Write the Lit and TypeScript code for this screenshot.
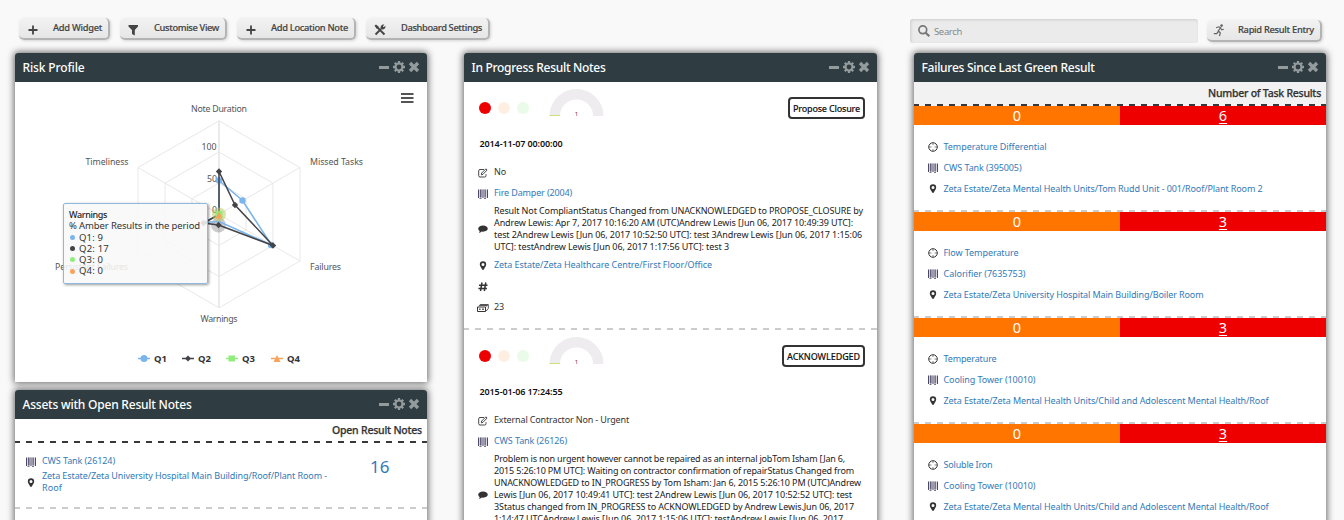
import { LitElement, html, svg, css } from "lit";
import { customElement, property } from "lit/decorators.js";

/* A single line of text set to a given measure by adjusting its tracking. */
@customElement("fit-line")
class FitLine extends LitElement {
  @property({ type: Number }) w = 0;
  static styles = css`:host{display:inline-block;white-space:nowrap}`;
  firstUpdated() {
    const n = (this.textContent || "").trim().length;
    const natural = this.getBoundingClientRect().width;
    if (this.w && n) this.style.letterSpacing = `${(this.w - natural) / n}px`;
  }
  render() { return html`<slot></slot>`; }
}

const t = (s: string, w: number) => html`<fit-line w=${w}>${s}</fit-line>`;

const glyphs: Record<string, unknown> = {
  plus: svg`<path d="M7 2.500v9M2.500 7h9" stroke="currentColor" stroke-width="1.800" fill="none"/>`,
  filter: svg`<path d="M2.500 2h9.500v1.500L8.800 7v5.500L6 11V7L2.500 3.500z"/>`,
  tools: svg`<path d="M3.500 3.500l8 8M2.500 11.500l5.500-5.500" stroke="currentColor" stroke-width="1.800" fill="none"/><path d="M1.500 2.800L3 1.500l3 2.400-2 2zM7.600 5.600C7 3 9 1.200 11.300 1.700L9.800 3.300l.9.9 1.700-1.400C13 5.200 10.600 7 8.600 6.400z"/>`,
  run: svg`<circle cx="9.600" cy="2.600" r="1.300"/><path d="M4 4.800L6.800 3.800l1.800.8L6.300 8l2 1.700-.8 3.300M6.300 8.400L4.800 10.600H1.800M8.400 5l1.400 1.800 2-.6" stroke="currentColor" stroke-width="1.200" fill="none"/>`,
  search: svg`<circle cx="5.800" cy="5.800" r="3.900" stroke="currentColor" stroke-width="1.700" fill="none"/><path d="M8.700 8.700l3.600 3.600" stroke="currentColor" stroke-width="2.200"/>`,
  minus: svg`<path d="M2 6h10v3H2z"/>`,
  gear: svg`<circle cx="7" cy="7" r="3.500" fill="none" stroke="currentColor" stroke-width="2.200"/><path d="M7 1v2.200M7 10.800V13M1 7h2.200M10.800 7H13M2.800 2.800l1.500 1.500M9.700 9.700l1.500 1.500M2.800 11.200l1.500-1.500M9.700 4.300l1.500-1.500" stroke="currentColor" stroke-width="2.300"/>`,
  close: svg`<path d="M3 3l8 8M11 3l-8 8" stroke="currentColor" stroke-width="3.300"/>`,
  edit: svg`<path d="M8 3.500H4Q2.700 3.500 2.700 4.800v4.900Q2.700 11 4 11h4.700q1.300 0 1.300-1.300V8.200" fill="none" stroke="currentColor" stroke-width=".9"/><path d="M5.300 8.800l.4-1.800L9.900 2.800l1.200 1.200L7 8.300z" fill="none" stroke="currentColor" stroke-width=".9"/>`,
  barcode: svg`<g fill="#4a4a66"><path d="M2 2.500h1v8.500H2zM4 2.500h1.500v8H4zM6.500 2.500h1v8.500h-1zM8.500 2.500h1.300v8H8.500zM11 2.500h1v8.500h-1zM3.500 11h2v.8h-2zM8 11h2v.8H8z"/></g><path d="M3 2.500h8v8H3z" fill="#8f86a0" opacity=".35"/>`,
  comment: svg`<path d="M7 3.500c2.800 0 4.800 1.400 4.800 3.100s-2 3.100-4.800 3.100q-.7 0-1.300-.1Q4.300 10.900 2.900 10.900q.8-.8.800-1.700Q2.200 8.200 2.200 6.600C2.200 4.900 4.200 3.500 7 3.500z"/>`,
  pin: svg`<path fill-rule="evenodd" d="M7 2.300a3.200 3.200 0 0 1 3.200 3.200c0 1.600-1.300 2.600-2.200 4.800q-1 1.500-2 0C5.100 8.100 3.800 7.100 3.800 5.500A3.200 3.200 0 0 1 7 2.300zM7 4a1.500 1.500 0 1 0 0 3A1.500 1.500 0 0 0 7 4z"/>`,
  hash: svg`<path d="M6 2.500l-1.500 8.500M9.800 2.500L8.300 11M3 5.200h8.500M2.400 8.400h8.500" stroke="currentColor" stroke-width="1.500" fill="none"/>`,
  card: svg`<path d="M1.500 6h8v4.500h-8z" fill="none" stroke="currentColor"/><path d="M2.800 5.300l1.300-1.800h8.200V7.500L10.200 10M9.800 5.600l2.200-2M4 4.500h7.500" fill="none" stroke="#555" stroke-width="1"/><path d="M3.200 7.500h1.300v1.500H3.200zM6.200 7.500h1.500v1.500H6.200z"/>`,
  target: svg`<circle cx="7" cy="7" r="4.300" fill="none" stroke="currentColor"/><path d="M7 3V5M7 9v2M3 7H5.500M8.500 7H11" stroke="currentColor" stroke-width=".6"/>`,
};
const icon = (n: string, cls = "") =>
  html`<svg class="ico ${cls}" width="14" height="14" viewBox="0 0 14 14" fill="currentColor">${glyphs[n]}</svg>`;

const base = css`
  *{box-sizing:border-box}
  .ico{display:block;flex:none}
  .link{color:#337ab7}
  .row{display:flex;align-items:center;min-height:21px;padding-left:12px;color:#333;font-size:9px;line-height:12px}
  .row .txt{margin-left:4px;display:flex;flex-direction:column;align-items:flex-start}
  .row .ico{position:relative;top:1px}
`;

@customElement("widget-panel")
class WidgetPanel extends LitElement {
  @property() name = "";
  @property({ type: Number }) w = 0;
  static styles = [base, css`
    :host{display:block;background:#fff;border-radius:3px 3px 0 0;box-shadow:0 0 7px 1px rgba(0,0,0,.6)}
    header{height:29px;background:#2f3d42;border-radius:3px 3px 0 0;display:flex;align-items:center;padding:0 6px 0 7.500px;color:#fff;font-size:12px;font-weight:500}
    .grow{flex:1}
    .tools{display:flex;gap:1px;color:#949b9d;margin-top:-1px}
  `];
  render() {
    return html`<header>${t(this.name, this.w)}<span class="grow"></span>
      <span class="tools">${icon("minus")}${icon("gear")}${icon("close")}</span></header><slot></slot>`;
  }
}

@customElement("risk-chart")
class RiskChart extends LitElement {
  static styles = css`
    :host{display:block;height:300px;position:relative}
    svg{display:block}
    text{font-size:8.800px;fill:#555}
    .key{font-size:9.500px;font-weight:700;fill:#333}
    .tip{box-sizing:border-box;position:absolute;left:48px;top:121px;width:145px;height:81px;border:1px solid #8fb9e0;border-radius:2px;background:rgba(248,248,248,.87);box-shadow:1px 1px 3px rgba(0,0,0,.4);padding:5px 5px 0;font-size:9.500px;line-height:11.300px;color:#333}
    .tip div{display:flex;align-items:center;height:11.300px}
    .tip .head{font-size:9px;font-weight:500;color:#222}
    i{width:5px;height:5px;border-radius:50%;margin:0 4px 0 1px}
    .q1{background:#7cb5ec}.q2{background:#434348}.q3{background:#90ed7d}.q4{background:#f7a35c}
  `;
  render() {
    const cx = 204, cy = 132.3;
    const hex = (r: number) => [0, 1, 2, 3, 4, 5].map(k => {
      const a = (k * Math.PI) / 3;
      return `${cx + r * Math.sin(a)},${cy - r * Math.cos(a)}`;
    });
    const label = (s: string, x: number, y: number, w: number) =>
      svg`<text x=${x} y=${y} textLength=${w}>${s}</text>`;
    const key = (s: string, x: number, c: string, m: unknown) =>
      svg`<path d="M${x} 276.500h12" stroke=${c} stroke-width="1.500"/>${m}<text class="key" x=${x + 16} y="280" textLength="13">${s}</text>`;
    return html`<svg width="412" height="300" viewBox="0 0 412 300">
      <g fill="none" stroke="#e8e8e8">
        ${[31.2, 62.3, 93.5].map(r => svg`<polygon points=${hex(r).join(" ")}/>`)}
        ${hex(93.5).map(p => svg`<path d="M${cx} ${cy}L${p}"/>`)}
      </g>
      <path d="M204 38.800V226" stroke="#e8e8e8" stroke-width="1.500"/>
      ${label("Note Duration", 176, 30, 56)}${label("Missed Tasks", 295, 83, 53)}
      ${label("Failures", 295, 188, 31)}${label("Warnings", 185.500, 240, 37)}
      ${label("Persistent Failures", 40, 188, 73)}${label("Timeliness", 70.500, 83, 43)}
      ${label("100", 186.500, 68, 15)}${label("50", 192, 100, 10)}${label("0", 197, 131, 5)}
      <circle cx="203.500" cy="143" r="7.500" fill="#434348" opacity=".27"/>
      <path d="M204 98.500L227.500 118.500L256.500 163L204 139.500L189 140.500L204 133z" fill="none" stroke="#7cb5ec" stroke-width="1.600"/>
      <g fill="#7cb5ec"><circle cx="204" cy="98.500" r="3.200"/><circle cx="227.500" cy="118.500" r="3.200"/><circle cx="256" cy="163" r="3.200"/></g>
      <path d="M204 89.500L220 123L258 163.500L203.500 143L188.500 141L204 132.500z" fill="none" stroke="#434348" stroke-width="1.500"/>
      ${[[204, 89.5], [220, 123], [258, 163.5], [203.5, 143], [188.5, 141]].map(([x, y]) =>
        svg`<path d="M${x} ${y - 3.2}l3.200 3.200-3.200 3.200-3.200-3.200z" fill="#434348"/>`)}
      <circle cx="204" cy="132.500" r="7" fill="#b9c85a" opacity=".5"/>
      <path d="M200.500 129h7v7h-7z" fill="#90ed7d"/><path d="M204 129l3.500 7.500h-7z" fill="#f7a35c"/>
      <path d="M386 12h12.500M386 16h12.500M386 20h12.500" stroke="#555" stroke-width="2"/>
      ${key("Q1", 123, "#7cb5ec", svg`<circle cx="129" cy="276.500" r="3.500" fill="#7cb5ec"/>`)}
      ${key("Q2", 167, "#434348", svg`<path d="M173 273.500l3 3-3 3-3-3z" fill="#434348"/>`)}
      ${key("Q3", 211, "#90ed7d", svg`<path d="M213.500 273.500h6.500v6h-6.500z" fill="#90ed7d"/>`)}
      ${key("Q4", 256, "#f7a35c", svg`<path d="M262 273l3.500 7h-7z" fill="#f7a35c"/>`)}
    </svg>
    <div class="tip"><div class="head">${t("Warnings", 38)}</div><div>${t("% Amber Results in the period", 131)}</div>
      <div><i class="q1"></i>${t("Q1: 9", 24)}</div><div><i class="q2"></i>${t("Q2: 17", 30)}</div>
      <div><i class="q3"></i>${t("Q3: 0", 24)}</div><div><i class="q4"></i>${t("Q4: 0", 24)}</div></div>`;
  }
}

type Line = [string, number];
const notes: { status: Line; date: string; type: Line; asset: Line; body: Line[]; tall?: boolean; place?: Line; count?: string }[] = [
  { status: ["Propose Closure", 67], date: "2014-11-07 00:00:00", type: ["No", 12], asset: ["Fire Damper (2004)", 78],
    body: [["Result Not CompliantStatus Changed from UNACKNOWLEDGED to PROPOSE_CLOSURE by", 369],
      ["Andrew Lewis: Apr 7, 2017 10:16:20 AM (UTC)Andrew Lewis [Jun 06, 2017 10:49:39 UTC]:", 359],
      ["test 2Andrew Lewis [Jun 06, 2017 10:52:50 UTC]: test 3Andrew Lewis [Jun 06, 2017 1:15:06", 368],
      ["UTC]: testAndrew Lewis [Jun 06, 2017 1:17:56 UTC]: test 3", 235]],
    place: ["Zeta Estate/Zeta Healthcare Centre/First Floor/Office", 218], count: "23" },
  { status: ["ACKNOWLEDGED", 73], date: "2015-01-06 17:24:55", type: ["External Contractor Non - Urgent", 135], asset: ["CWS Tank (26126)", 73], tall: true,
    body: [["Problem is non urgent however cannot be repaired as an internal jobTom Isham [Jan 6,", 351],
      ["2015 5:26:10 PM UTC]: Waiting on contractor confirmation of repairStatus Changed from", 360],
      ["UNACKNOWLEDGED to IN_PROGRESS by Tom Isham: Jan 6, 2015 5:26:10 PM (UTC)Andrew", 367],
      ["Lewis [Jun 06, 2017 10:49:41 UTC]: test 2Andrew Lewis [Jun 06, 2017 10:52:52 UTC]: test", 358],
      ["3Status changed from IN_PROGRESS to ACKNOWLEDGED by Andrew Lewis.Jun 06, 2017", 360],
      ["1:14:47 UTCAndrew Lewis [Jun 06, 2017 1:15:06 UTC]: testAndrew Lewis [Jun 06, 2017", 349]] },
];

const failures: { n: string; task: Line; asset: Line; place: Line }[] = [
  { n: "6", task: ["Temperature Differential", 103], asset: ["CWS Tank (395005)", 78], place: ["Zeta Estate/Zeta Mental Health Units/Tom Rudd Unit - 001/Roof/Plant Room 2", 319] },
  { n: "3", task: ["Flow Temperature", 75], asset: ["Calorifier (7635753)", 82], place: ["Zeta Estate/Zeta University Hospital Main Building/Boiler Room", 260] },
  { n: "3", task: ["Temperature", 53], asset: ["Cooling Tower (10010)", 92], place: ["Zeta Estate/Zeta Mental Health Units/Child and Adolescent Mental Health/Roof", 325] },
  { n: "3", task: ["Soluble Iron", 49], asset: ["Cooling Tower (10010)", 92], place: ["Zeta Estate/Zeta Mental Health Units/Child and Adolescent Mental Health/Roof", 325] },
];

@customElement("app-root")
class AppRoot extends LitElement {
  static styles = [base, css`
    :host{display:block;height:520px;overflow:hidden;background:#f9f9f9;font-family:"Noto Sans","Open Sans",sans-serif;color:#333}
    .bar{display:flex;height:53px;padding:18px 22px 0 19px;gap:10px}
    .btn{height:22px;display:flex;align-items:center;border-radius:5px;background:linear-gradient(#f2f2f2,#e6e6e6);border:solid #b4b4b4;border-width:0 2px 2px 0;box-shadow:1px 1px 3px rgba(0,0,0,.15);font-size:9.300px;font-weight:500;color:#444;-webkit-text-stroke:.15px #444;padding:0 6px 0 7px;justify-content:space-between}
    .btn fit-line{position:relative;top:-.5px}
    .btn .ico{position:relative;top:1.500px}
    .b1{width:91px}.b2{width:107px;padding-left:6px}.b3{width:119px}.b4{width:124px}.b5{width:115px;margin-top:2px}
    .b5 .ico{top:-.5px;left:-2px;color:#666}
    .grow{flex:1}
    .search{width:288px;height:24px;margin:1px -1px 0 0;border-radius:3px;background:#ebebeb;box-shadow:inset 1px 1px 3px rgba(0,0,0,.13);display:flex;align-items:center;padding-left:7px;gap:3px;font-size:9.500px;color:#888}
    .search .ico{color:#777}
    .cols{display:grid;grid-template-columns:412px 413px 412px;gap:37px;padding-left:15px;align-items:start}
    .left{display:flex;flex-direction:column;gap:8px}
    .full{height:600px}
    .dash{height:2px;background:repeating-linear-gradient(90deg,#ccc 0 5px,transparent 5px 11px,#ccc 11px 12px)}
    .dark{background:repeating-linear-gradient(90deg,#383838 0 5px,transparent 5px 11px,#383838 11px 12px)}
    .sub{height:22px;display:flex;justify-content:flex-end;align-items:center;font-size:10.500px;font-weight:500;color:#333;-webkit-text-stroke:.25px #333;padding-right:5px}
    .grey{background-color:#f2f2f2}
    .asset{display:flex;height:64px;padding-top:9px}
    .asset .list{width:337px}
    .asset .row{min-height:18px;padding-left:9px}
    .asset .row.two{min-height:24px}
    .big{font-size:17px;line-height:24px;color:#337ab7;padding:3px 0 0 18px}
    .note{padding-bottom:10.500px}
    .top{height:52px;display:flex;align-items:center;padding:0 12px 0 15px}
    .dot{width:12px;height:12px;border-radius:50%;margin-right:7px}
    .r{background:#e00}.o{background:#ffefe3}.g{background:#eafbea}
    .gauge{display:block;margin-left:11px;margin-top:-16px}
    .gauge text{font-size:6px;fill:#722}
    .pill{height:22px;border:2px solid #333;border-radius:4px;display:flex;align-items:center;padding:0 3px;font-size:9px;font-weight:500;color:#111;-webkit-text-stroke:.1px #111}
    .date{height:20px;line-height:20px;padding-left:15.500px;font-size:9px;font-weight:600;color:#111;margin-bottom:7.500px}
    .body{padding-top:1.500px;padding-bottom:1.500px;color:#222}
    .body .ico{top:0;color:#333}
    .tall .txt{min-height:84px}
    .pair{display:grid;grid-template-columns:1fr 1fr;height:19px;line-height:18px;font-size:14.500px;text-align:center;color:#fff}
    .am{background:#ff7500}.rd{background:#e00}
    .rd span{text-decoration:underline;text-underline-offset:2px}
    .fail{height:104px}
    .fail .rows{padding-top:11px}
    .fail .row{padding-left:11.500px}
    .fail .row .ico{top:.5px}
  `];
  row(ic: string, l: Line | null, link = false) {
    return html`<div class="row">${icon(ic)}<span class="txt ${link ? "link" : ""}">${l ? t(...l) : ""}</span></div>`;
  }
  render() {
    return html`
    <div class="bar">
      <div class="btn b1">${icon("plus")}${t("Add Widget", 49)}</div>
      <div class="btn b2">${icon("filter")}${t("Customise View", 65)}</div>
      <div class="btn b3">${icon("plus")}${t("Add Location Note", 77)}</div>
      <div class="btn b4">${icon("tools")}${t("Dashboard Settings", 81)}</div>
      <span class="grow"></span>
      <div class="search">${icon("search")}${t("Search", 28)}</div>
      <div class="btn b5">${icon("run")}${t("Rapid Result Entry", 76)}</div>
    </div>
    <div class="cols">
      <div class="left">
        <widget-panel name="Risk Profile" w="62"><risk-chart></risk-chart></widget-panel>
        <widget-panel name="Assets with Open Result Notes" w="169">
          <div class="sub">${t("Open Result Notes", 90)}</div><div class="dash dark"></div>
          <div class="asset"><div class="list">
            ${this.row("barcode", ["CWS Tank (26124)", 73], true)}
            <div class="row two">${icon("pin")}<span class="txt link">${t("Zeta Estate/Zeta University Hospital Main Building/Roof/Plant Room -", 285)}${t("Roof", 20)}</span></div>
          </div><div class="big">16</div></div>
          <div class="dash"></div>
          <div class="full"></div>
        </widget-panel>
      </div>
      <widget-panel name="In Progress Result Notes" w="134">
        ${notes.map(n => html`<div class="note">
          <div class="top"><span class="dot r"></span><span class="dot o"></span><span class="dot g"></span>
            <svg class="gauge" width="60" height="32" viewBox="0 0 60 32"><path d="M8.750 32A21.750 21.750 0 0 1 52.250 32" transform="translate(-1 0)" fill="none" stroke="#eeecee" stroke-width="10.500"/><path d="M2.500 31.500h10.500" stroke="#cfe07a"/><text x="27.800" y="31.500">1</text></svg>
            <span class="grow"></span><div class="pill">${t(...n.status)}</div></div>
          <div class="date">${t(n.date, 83)}</div>
          ${this.row("edit", n.type)}${this.row("barcode", n.asset, true)}
          <div class="row body ${n.tall ? "tall" : ""}">${icon("comment")}<span class="txt">${n.body.map(l => t(...l))}</span></div>
          ${n.place ? this.row("pin", n.place, true) : ""}${n.count ? html`${this.row("hash", null)}${this.row("card", [n.count, 10])}` : ""}
        </div><div class="dash"></div>`)}
      </widget-panel>
      <widget-panel name="Failures Since Last Green Result" w="173">
        <div class="sub grey">${t("Number of Task Results", 113)}</div><div class="grey"><div class="dash dark"></div></div>
        ${failures.map(f => html`<div class="fail"><div class="pair"><div class="am">0</div><div class="rd"><span>${f.n}</span></div></div>
          <div class="rows">${this.row("target", f.task, true)}${this.row("barcode", f.asset, true)}${this.row("pin", f.place, true)}</div></div><div class="dash"></div>`)}
      </widget-panel>
    </div>`;
  }
}
